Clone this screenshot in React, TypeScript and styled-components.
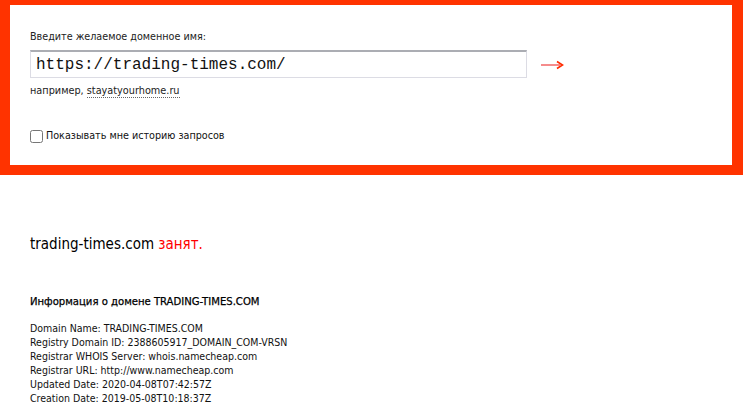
import React from 'react';
import styled, {createGlobalStyle} from "styled-components";

const GlobalStyle = createGlobalStyle`
  body {
    margin: 0;
    background: #fff;
    font-family: "DejaVu Sans Condensed", "DejaVu Sans", Tahoma, sans-serif;
    font-stretch: condensed;
    color: #000;
  }
`

const whoisLines = [
    'Domain Name: TRADING-TIMES.COM',
    'Registry Domain ID: 2388605917_DOMAIN_COM-VRSN',
    'Registrar WHOIS Server: whois.namecheap.com',
    'Registrar URL: http://www.namecheap.com',
    'Updated Date: 2020-04-08T07:42:57Z',
    'Creation Date: 2019-05-08T10:18:37Z',
];

export default function App() {
    return (
        <>
            <GlobalStyle/>
            <SearchBox>
                <FieldLabel>Введите желаемое доменное имя:</FieldLabel>
                <InputRow>
                    <DomainInput defaultValue="https://trading-times.com/"/>
                    <GoButton aria-label="go">
                        <svg width="24" height="12" viewBox="0 0 24 12">
                            <line x1="1" y1="6" x2="20" y2="6" stroke="#f58c8c" strokeWidth="2"/>
                            <path d="M17 2.5 L22.5 6 L17 9.5" fill="none" stroke="#ff2a00" strokeWidth="1.6"/>
                        </svg>
                    </GoButton>
                </InputRow>
                <Hint>например, <HintLink>stayatyourhome.ru</HintLink></Hint>
                <HistoryLabel>
                    <Check type="checkbox"/>
                    Показывать мне историю запросов
                </HistoryLabel>
            </SearchBox>
            <Result>
                <Status>trading-times.com <Busy>занят.</Busy></Status>
                <InfoTitle>Информация о домене TRADING-TIMES.COM</InfoTitle>
                <Whois>
                    {whoisLines.map(line => <WhoisLine key={line}>{line}</WhoisLine>)}
                </Whois>
            </Result>
        </>
    );
}

const SearchBox = styled.section`
  border-style: solid;
  border-color: #ff3300;
  border-width: 5px 11px 10px 10px;
  padding: 25px 20px 22px;
  display: flex;
  flex-direction: column;
`
const FieldLabel = styled.div`
  font-size: 10.7px;
  line-height: 14px;
  color: #222;
`
const InputRow = styled.div`
  display: flex;
  align-items: center;
  gap: 13px;
  margin-top: 6px;
`
const DomainInput = styled.input`
  box-sizing: border-box;
  width: 497px;
  height: 28px;
  border: 1px solid #dcdce4;
  border-top: 2px solid #abadb3;
  padding: 0 5px;
  font-family: "Liberation Mono", "Courier New", monospace;
  font-size: 16px;
  color: #111;
  outline: none;
`
const GoButton = styled.a`
  display: flex;
  margin-top: 2px;
  cursor: pointer;
`
const Hint = styled.div`
  margin-top: 6px;
  font-size: 10.8px;
  line-height: 14px;
  color: #222;
`
const HintLink = styled.span`
  border-bottom: 1px dotted #666;
`
const HistoryLabel = styled.label`
  margin-top: 31px;
  display: flex;
  align-items: center;
  gap: 3px;
  font-size: 10.7px;
  line-height: 14px;
  color: #111;
`
const Check = styled.input`
  margin: 0;
  width: 13px;
  height: 13px;
`
const Result = styled.section`
  padding: 60px 30px 0;
`
const Status = styled.div`
  font-size: 15px;
  line-height: 18px;
`
const Busy = styled.span`
  color: #ff0000;
`
const InfoTitle = styled.div`
  margin-top: 42px;
  font-size: 11.2px;
  line-height: 14px;
  color: #000;
  -webkit-text-stroke: 0.25px #000;
`
const Whois = styled.div`
  margin-top: 12px;
`
const WhoisLine = styled.div`
  font-size: 10.5px;
  line-height: 14px;
  color: #111;
`
